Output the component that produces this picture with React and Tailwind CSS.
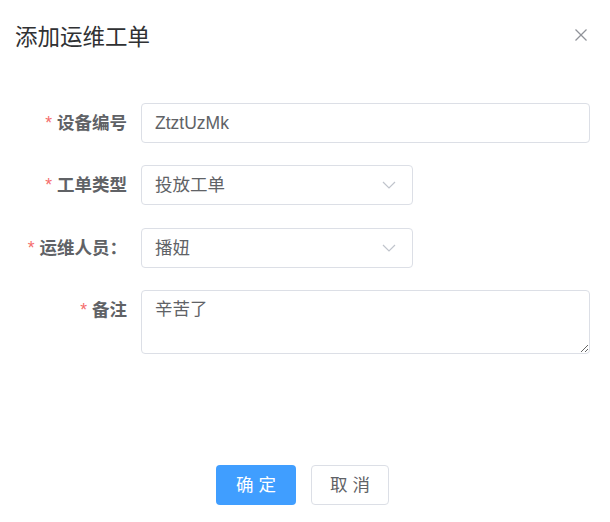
import React from 'react';

const FONT = "font-['Liberation_Sans','Noto_Sans_CJK_SC',sans-serif]";

function Chevron() {
  return (
    <svg width="14" height="8" viewBox="0 0 14 8" className="absolute right-[16px] top-1/2 -translate-y-1/2">
      <polyline points="1,1 7,7 13,1" fill="none" stroke="#C0C4CC" strokeWidth="1.2" />
    </svg>
  );
}

function Label({ children }) {
  return (
    <label className="w-[141px] shrink-0 pr-[14px] h-[40px] flex items-center justify-end text-[17.5px] font-bold text-[#606266]">
      <span className="text-[#F56C6C] mr-[5px] font-normal">*</span>
      {children}
    </label>
  );
}

function SelectBox({ value }) {
  return (
    <div className="relative w-[272px] h-[40px] border border-[#DCDFE6] rounded-[4px] bg-white flex items-center pl-[13px] text-[17.5px] text-[#606266]">
      <span>{value}</span>
      <Chevron />
    </div>
  );
}

export default function App() {
  return (
    <div className={`w-[610px] h-[522px] bg-white flex flex-col ${FONT}`}>
      <div className="h-[76px] flex items-center justify-between pl-[15px] pr-[23px]">
        <h2 className="text-[22.5px] text-[#303133] font-normal">添加运维工单</h2>
        <button className="-mt-[6px]">
          <svg width="12" height="12" viewBox="0 0 12 12">
            <line x1="0.5" y1="0.5" x2="11.5" y2="11.5" stroke="#909399" strokeWidth="1.3" />
            <line x1="11.5" y1="0.5" x2="0.5" y2="11.5" stroke="#909399" strokeWidth="1.3" />
          </svg>
        </button>
      </div>

      <form className="pt-[27px]">
        <div className="flex mb-[22px]">
          <Label>设备编号</Label>
          <input
            readOnly
            defaultValue="ZtztUzMk"
            className="w-[449px] h-[40px] border border-[#DCDFE6] rounded-[4px] px-[13px] text-[17.5px] text-[#606266] outline-none"
          />
        </div>
        <div className="flex mb-[23px]">
          <Label>工单类型</Label>
          <SelectBox value="投放工单" />
        </div>
        <div className="flex mb-[22px]">
          <Label>运维人员：</Label>
          <SelectBox value="播妞" />
        </div>
        <div className="flex">
          <Label>备注</Label>
          <textarea
            readOnly
            defaultValue="辛苦了"
            className="w-[449px] h-[64px] border border-[#DCDFE6] rounded-[4px] px-[13px] py-[5px] leading-[1.5] text-[17.5px] text-[#606266] outline-none resize-y"
          />
        </div>
      </form>

      <div className="mt-[111px] flex justify-center gap-[15px] pr-[5px]">
        <button className="w-[80px] h-[40px] rounded-[4px] bg-[#409EFF] text-white text-[17.5px] tracking-[5px] pl-[5px]">
          确定
        </button>
        <button className="w-[78px] h-[40px] rounded-[4px] border border-[#DCDFE6] bg-white text-[#606266] text-[17.5px] tracking-[5px] pl-[5px]">
          取消
        </button>
      </div>
    </div>
  );
}
